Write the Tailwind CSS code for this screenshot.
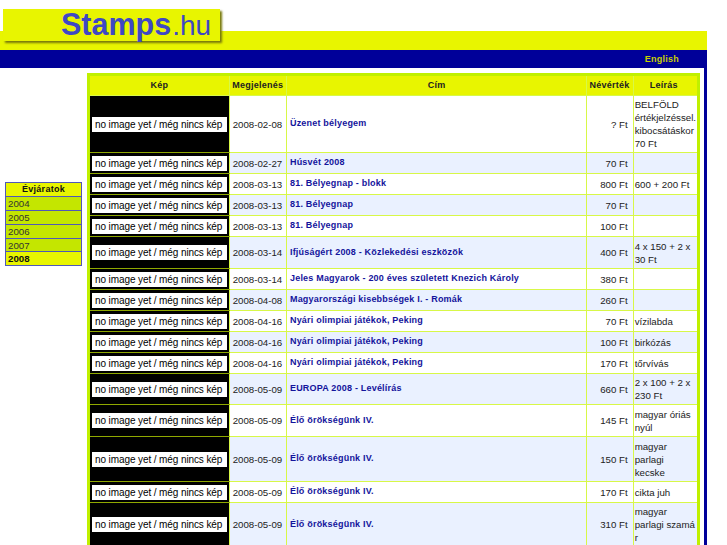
<!DOCTYPE html>
<html lang="en">
<head>
    <meta charset="UTF-8">
    <title>Stamps.hu</title>
    <script src="https://cdn.jsdelivr.net/npm/@tailwindcss/browser@4"></script>
</head>
<body class="bg-white text-[#222] font-['Liberation_Sans',Arial,sans-serif] text-[9.7px] h-[545px] overflow-hidden">

    <!-- Header -->
    <div class="relative w-[707px] pt-[31px]">
        <div class="absolute left-[3px] top-[9px] w-[217px] h-[32px] bg-[#e8f500] shadow-[2px_2px_2px_#77790a] pl-[58px] pt-[1px] leading-[28px] text-[#3f48c4] whitespace-nowrap"><b class="text-[30.5px]">Stamps</b><span class="text-[28px] pl-[1px]">.hu</span></div>
        <div class="h-[19px] bg-[#e8f500]"></div>
        <div class="h-[18px] pt-[1px] bg-[#000099] flex justify-end items-center pr-[28px] text-[9px] font-bold text-[#c8d000] tracking-[0.25px]">English</div>
    </div>

    <div class="flex w-[707px] border-r-[3px] border-[#000099]">
        <!-- Years -->
        <div class="w-[87px] shrink-0 pt-[114px] pl-[5px]">
            <div class="w-[77px] border border-[#5058b8] text-[#333] leading-[13px]">
                <div class="h-[13px] bg-[#e8f500] text-center font-bold text-[9px] tracking-[0.3px] text-[#111]">Évjáratok</div>
                <div class="h-[14px] pl-[2px] bg-[#c4e600] border-t border-[#5058b8]">2004</div>
                <div class="h-[14px] pl-[2px] bg-[#c4e600] border-t border-[#5058b8]">2005</div>
                <div class="h-[14px] pl-[2px] bg-[#c4e600] border-t border-[#5058b8]">2006</div>
                <div class="h-[13px] pl-[2px] bg-[#c4e600] border-t border-[#5058b8]">2007</div>
                <div class="h-[14px] pl-[2px] bg-[#e8f500] border-t border-[#5058b8] font-bold text-[#111]">2008</div>
            </div>
        </div>

        <!-- Table -->
        <div class="pt-[5px]">
            <table class="w-[613px] table-fixed border-collapse border-[3px] border-[#c0f000] leading-[13px] whitespace-nowrap">
                <colgroup>
                    <col class="w-[140px]"><col class="w-[57px]"><col class="w-[299px]"><col class="w-[46px]"><col class="w-[65px]">
                </colgroup>
                <thead>
                    <tr class="h-[21px] bg-[#e8f500] font-bold text-[9px] tracking-[0.25px] text-[#222] text-center">
                        <th class="border border-[#d8f848] pb-[1px]">Kép</th>
                        <th class="border border-[#d8f848] pb-[1px]">Megjelenés</th>
                        <th class="border border-[#d8f848] pb-[1px]">Cím</th>
                        <th class="border border-[#d8f848] pb-[1px] pr-[1px]">Névérték</th>
                        <th class="border border-[#d8f848] pb-[1px] pr-[3px]">Leírás</th>
                    </tr>
                </thead>
                <tbody>
                    <tr class="h-[57px] bg-white">
                        <td class="border border-[#d8f848] border-y-[#8fa800] bg-black px-[2px]"><div class="bg-white text-black text-[10px] tracking-[-0.1px] h-[15px] leading-[15px] pl-[3px]">no image yet / még nincs kép</div></td>
                        <td class="border border-[#d8f848] pl-[3px]">2008-02-08</td>
                        <td class="border border-[#d8f848] pl-[3px] text-[#14149c] font-bold text-[9px] tracking-[0.2px] pb-[1px]">Üzenet bélyegem</td>
                        <td class="border border-[#d8f848] pr-[5px] text-right">? Ft</td>
                        <td class="border border-[#d8f848] pl-[1px]">BELFÖLD<br>értékjelzéssel.<br>kibocsátáskor<br>70 Ft</td>
                    </tr>
                    <tr class="h-[21px] bg-[#eaf1ff]">
                        <td class="border border-[#d8f848] border-y-[#8fa800] bg-black px-[2px]"><div class="bg-white text-black text-[10px] tracking-[-0.1px] h-[15px] leading-[15px] pl-[3px]">no image yet / még nincs kép</div></td>
                        <td class="border border-[#d8f848] pl-[3px]">2008-02-27</td>
                        <td class="border border-[#d8f848] pl-[3px] text-[#14149c] font-bold text-[9px] tracking-[0.2px] pb-[1px]">Húsvét 2008</td>
                        <td class="border border-[#d8f848] pr-[5px] text-right">70 Ft</td>
                        <td class="border border-[#d8f848] pl-[1px]"></td>
                    </tr>
                    <tr class="h-[21px] bg-white">
                        <td class="border border-[#d8f848] border-y-[#8fa800] bg-black px-[2px]"><div class="bg-white text-black text-[10px] tracking-[-0.1px] h-[15px] leading-[15px] pl-[3px]">no image yet / még nincs kép</div></td>
                        <td class="border border-[#d8f848] pl-[3px]">2008-03-13</td>
                        <td class="border border-[#d8f848] pl-[3px] text-[#14149c] font-bold text-[9px] tracking-[0.2px] pb-[1px]">81. Bélyegnap - blokk</td>
                        <td class="border border-[#d8f848] pr-[5px] text-right">800 Ft</td>
                        <td class="border border-[#d8f848] pl-[1px]">600 + 200 Ft</td>
                    </tr>
                    <tr class="h-[21px] bg-[#eaf1ff]">
                        <td class="border border-[#d8f848] border-y-[#8fa800] bg-black px-[2px]"><div class="bg-white text-black text-[10px] tracking-[-0.1px] h-[15px] leading-[15px] pl-[3px]">no image yet / még nincs kép</div></td>
                        <td class="border border-[#d8f848] pl-[3px]">2008-03-13</td>
                        <td class="border border-[#d8f848] pl-[3px] text-[#14149c] font-bold text-[9px] tracking-[0.2px] pb-[1px]">81. Bélyegnap</td>
                        <td class="border border-[#d8f848] pr-[5px] text-right">70 Ft</td>
                        <td class="border border-[#d8f848] pl-[1px]"></td>
                    </tr>
                    <tr class="h-[21px] bg-white">
                        <td class="border border-[#d8f848] border-y-[#8fa800] bg-black px-[2px]"><div class="bg-white text-black text-[10px] tracking-[-0.1px] h-[15px] leading-[15px] pl-[3px]">no image yet / még nincs kép</div></td>
                        <td class="border border-[#d8f848] pl-[3px]">2008-03-13</td>
                        <td class="border border-[#d8f848] pl-[3px] text-[#14149c] font-bold text-[9px] tracking-[0.2px] pb-[1px]">81. Bélyegnap</td>
                        <td class="border border-[#d8f848] pr-[5px] text-right">100 Ft</td>
                        <td class="border border-[#d8f848] pl-[1px]"></td>
                    </tr>
                    <tr class="h-[32px] bg-[#eaf1ff]">
                        <td class="border border-[#d8f848] border-y-[#8fa800] bg-black px-[2px]"><div class="bg-white text-black text-[10px] tracking-[-0.1px] h-[15px] leading-[15px] pl-[3px]">no image yet / még nincs kép</div></td>
                        <td class="border border-[#d8f848] pl-[3px]">2008-03-14</td>
                        <td class="border border-[#d8f848] pl-[3px] text-[#14149c] font-bold text-[9px] tracking-[0.2px] pb-[1px]">Ifjúságért 2008 - Közlekedési eszközök</td>
                        <td class="border border-[#d8f848] pr-[5px] text-right">400 Ft</td>
                        <td class="border border-[#d8f848] pl-[1px]">4 x 150 + 2 x<br>30 Ft</td>
                    </tr>
                    <tr class="h-[21px] bg-white">
                        <td class="border border-[#d8f848] border-y-[#8fa800] bg-black px-[2px]"><div class="bg-white text-black text-[10px] tracking-[-0.1px] h-[15px] leading-[15px] pl-[3px]">no image yet / még nincs kép</div></td>
                        <td class="border border-[#d8f848] pl-[3px]">2008-03-14</td>
                        <td class="border border-[#d8f848] pl-[3px] text-[#14149c] font-bold text-[9px] tracking-[0.2px] pb-[1px]">Jeles Magyarok - 200 éves született Knezich Károly</td>
                        <td class="border border-[#d8f848] pr-[5px] text-right">380 Ft</td>
                        <td class="border border-[#d8f848] pl-[1px]"></td>
                    </tr>
                    <tr class="h-[21px] bg-[#eaf1ff]">
                        <td class="border border-[#d8f848] border-y-[#8fa800] bg-black px-[2px]"><div class="bg-white text-black text-[10px] tracking-[-0.1px] h-[15px] leading-[15px] pl-[3px]">no image yet / még nincs kép</div></td>
                        <td class="border border-[#d8f848] pl-[3px]">2008-04-08</td>
                        <td class="border border-[#d8f848] pl-[3px] text-[#14149c] font-bold text-[9px] tracking-[0.2px] pb-[1px]">Magyarországi kisebbségek I. - Romák</td>
                        <td class="border border-[#d8f848] pr-[5px] text-right">260 Ft</td>
                        <td class="border border-[#d8f848] pl-[1px]"></td>
                    </tr>
                    <tr class="h-[21px] bg-white">
                        <td class="border border-[#d8f848] border-y-[#8fa800] bg-black px-[2px]"><div class="bg-white text-black text-[10px] tracking-[-0.1px] h-[15px] leading-[15px] pl-[3px]">no image yet / még nincs kép</div></td>
                        <td class="border border-[#d8f848] pl-[3px]">2008-04-16</td>
                        <td class="border border-[#d8f848] pl-[3px] text-[#14149c] font-bold text-[9px] tracking-[0.2px] pb-[1px]">Nyári olimpiai játékok, Peking</td>
                        <td class="border border-[#d8f848] pr-[5px] text-right">70 Ft</td>
                        <td class="border border-[#d8f848] pl-[1px]">vízilabda</td>
                    </tr>
                    <tr class="h-[21px] bg-[#eaf1ff]">
                        <td class="border border-[#d8f848] border-y-[#8fa800] bg-black px-[2px]"><div class="bg-white text-black text-[10px] tracking-[-0.1px] h-[15px] leading-[15px] pl-[3px]">no image yet / még nincs kép</div></td>
                        <td class="border border-[#d8f848] pl-[3px]">2008-04-16</td>
                        <td class="border border-[#d8f848] pl-[3px] text-[#14149c] font-bold text-[9px] tracking-[0.2px] pb-[1px]">Nyári olimpiai játékok, Peking</td>
                        <td class="border border-[#d8f848] pr-[5px] text-right">100 Ft</td>
                        <td class="border border-[#d8f848] pl-[1px]">birkózás</td>
                    </tr>
                    <tr class="h-[21px] bg-white">
                        <td class="border border-[#d8f848] border-y-[#8fa800] bg-black px-[2px]"><div class="bg-white text-black text-[10px] tracking-[-0.1px] h-[15px] leading-[15px] pl-[3px]">no image yet / még nincs kép</div></td>
                        <td class="border border-[#d8f848] pl-[3px]">2008-04-16</td>
                        <td class="border border-[#d8f848] pl-[3px] text-[#14149c] font-bold text-[9px] tracking-[0.2px] pb-[1px]">Nyári olimpiai játékok, Peking</td>
                        <td class="border border-[#d8f848] pr-[5px] text-right">170 Ft</td>
                        <td class="border border-[#d8f848] pl-[1px]">tőrvívás</td>
                    </tr>
                    <tr class="h-[31px] bg-[#eaf1ff]">
                        <td class="border border-[#d8f848] border-y-[#8fa800] bg-black px-[2px]"><div class="bg-white text-black text-[10px] tracking-[-0.1px] h-[15px] leading-[15px] pl-[3px]">no image yet / még nincs kép</div></td>
                        <td class="border border-[#d8f848] pl-[3px]">2008-05-09</td>
                        <td class="border border-[#d8f848] pl-[3px] text-[#14149c] font-bold text-[9px] tracking-[0.2px] pb-[1px]">EUROPA 2008 - Levélírás</td>
                        <td class="border border-[#d8f848] pr-[5px] text-right">660 Ft</td>
                        <td class="border border-[#d8f848] pl-[1px]">2 x 100 + 2 x<br>230 Ft</td>
                    </tr>
                    <tr class="h-[32px] bg-white">
                        <td class="border border-[#d8f848] border-y-[#8fa800] bg-black px-[2px]"><div class="bg-white text-black text-[10px] tracking-[-0.1px] h-[15px] leading-[15px] pl-[3px]">no image yet / még nincs kép</div></td>
                        <td class="border border-[#d8f848] pl-[3px]">2008-05-09</td>
                        <td class="border border-[#d8f848] pl-[3px] text-[#14149c] font-bold text-[9px] tracking-[0.2px] pb-[1px]">Élő örökségünk IV.</td>
                        <td class="border border-[#d8f848] pr-[5px] text-right">145 Ft</td>
                        <td class="border border-[#d8f848] pl-[1px]">magyar óriás<br>nyúl</td>
                    </tr>
                    <tr class="h-[45px] bg-[#eaf1ff]">
                        <td class="border border-[#d8f848] border-y-[#8fa800] bg-black px-[2px]"><div class="bg-white text-black text-[10px] tracking-[-0.1px] h-[15px] leading-[15px] pl-[3px]">no image yet / még nincs kép</div></td>
                        <td class="border border-[#d8f848] pl-[3px]">2008-05-09</td>
                        <td class="border border-[#d8f848] pl-[3px] text-[#14149c] font-bold text-[9px] tracking-[0.2px] pb-[1px]">Élő örökségünk IV.</td>
                        <td class="border border-[#d8f848] pr-[5px] text-right">150 Ft</td>
                        <td class="border border-[#d8f848] pl-[1px]">magyar<br>parlagi<br>kecske</td>
                    </tr>
                    <tr class="h-[21px] bg-white">
                        <td class="border border-[#d8f848] border-y-[#8fa800] bg-black px-[2px]"><div class="bg-white text-black text-[10px] tracking-[-0.1px] h-[15px] leading-[15px] pl-[3px]">no image yet / még nincs kép</div></td>
                        <td class="border border-[#d8f848] pl-[3px]">2008-05-09</td>
                        <td class="border border-[#d8f848] pl-[3px] text-[#14149c] font-bold text-[9px] tracking-[0.2px] pb-[1px]">Élő örökségünk IV.</td>
                        <td class="border border-[#d8f848] pr-[5px] text-right">170 Ft</td>
                        <td class="border border-[#d8f848] pl-[1px]">cikta juh</td>
                    </tr>
                    <tr class="h-[45px] bg-[#eaf1ff]">
                        <td class="border border-[#d8f848] border-y-[#8fa800] bg-black px-[2px]"><div class="bg-white text-black text-[10px] tracking-[-0.1px] h-[15px] leading-[15px] pl-[3px]">no image yet / még nincs kép</div></td>
                        <td class="border border-[#d8f848] pl-[3px]">2008-05-09</td>
                        <td class="border border-[#d8f848] pl-[3px] text-[#14149c] font-bold text-[9px] tracking-[0.2px] pb-[1px]">Élő örökségünk IV.</td>
                        <td class="border border-[#d8f848] pr-[5px] text-right">310 Ft</td>
                        <td class="border border-[#d8f848] pl-[1px]">magyar<br>parlagi szamá<br>r</td>
                    </tr>
                </tbody>
            </table>
        </div>
    </div>

</body>
</html>
